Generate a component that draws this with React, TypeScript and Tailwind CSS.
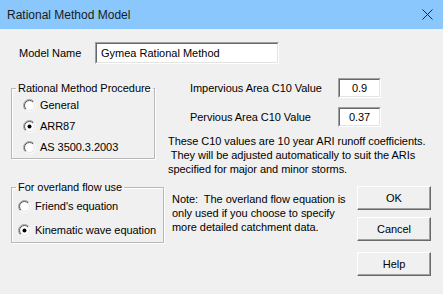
import React from 'react'

const font = "font-['Liberation_Sans',Arial,sans-serif]"

function Radio({ checked }: { checked?: boolean }) {
  return (
    <svg width="13" height="13" viewBox="0 0 13 13" className="shrink-0">
      <defs>
        <linearGradient id="rOuter" x1="0" y1="0" x2="1" y2="1">
          <stop offset="0.45" stopColor="#a0a0a0" />
          <stop offset="0.55" stopColor="#ffffff" />
        </linearGradient>
        <linearGradient id="rInner" x1="0" y1="0" x2="1" y2="1">
          <stop offset="0.45" stopColor="#505050" />
          <stop offset="0.55" stopColor="#e3e3e3" />
        </linearGradient>
      </defs>
      <circle cx="6.5" cy="6.5" r="6" fill="none" stroke="url(#rOuter)" strokeWidth="1" />
      <circle cx="6.5" cy="6.5" r="5" fill="#fff" stroke="url(#rInner)" strokeWidth="1" />
      {checked && <circle cx="6.5" cy="6.5" r="2" fill="#000" />}
    </svg>
  )
}

function Sunken({ className, children }: { className: string; children?: React.ReactNode }) {
  return (
    <div className={`border-t border-l border-t-[#a0a0a0] border-l-[#a0a0a0] border-b border-r border-b-white border-r-white ${className}`}>
      <div className="h-full w-full bg-white border-t border-l border-t-[#696969] border-l-[#696969] border-b border-r border-b-[#e3e3e3] border-r-[#e3e3e3] flex items-center">
        {children}
      </div>
    </div>
  )
}

function Button({ label }: { label: string }) {
  return (
    <div className="w-[74px] h-[24px] bg-[#f0f0f0] border-t border-l border-t-white border-l-white border-b border-r border-b-[#696969] border-r-[#696969] shadow-[inset_-1px_-1px_0_#a0a0a0] flex items-center justify-center text-[11px] text-black">
      {label}
    </div>
  )
}

function Group({ title, width, children }: { title: string; width: string; children: React.ReactNode }) {
  return (
    <fieldset className={`${width} border border-[#b8b8b8] shadow-[inset_1px_1px_0_#fff,1px_1px_0_#fff] pl-[4px]`}>
      <legend className="px-[2px] leading-[14px] text-[11px]">{title}</legend>
      {children}
    </fieldset>
  )
}

export default function App() {
  return (
    <div className={`w-[443px] h-[294px] bg-[#f0f0f0] text-black ${font} overflow-hidden`}>
      {/* title bar */}
      <div className="h-[29px] bg-[#8ac7fd] flex items-center justify-between pl-[7px] pr-[10px]">
        <span className="text-[12px] text-[#1a1a1a]">Rational Method Model</span>
        <svg width="11" height="11" viewBox="0 0 11 11">
          <path d="M0.5 0.5 L10.5 10.5 M10.5 0.5 L0.5 10.5" stroke="#222" strokeWidth="1" />
        </svg>
      </div>

      {/* model name */}
      <div className="flex items-center pl-[19px] pt-[13px] text-[11px]">
        <span className="w-[76px]">Model Name</span>
        <Sunken className="w-[184px] h-[22px]">
          <span className="pl-[4px]">Gymea Rational Method</span>
        </Sunken>
      </div>

      <div className="flex mt-[14px] text-[11px] tracking-[-0.05px]">
        {/* left column */}
        <div className="pl-[11px] pt-[3px] w-[164px] flex flex-col gap-[21px]">
          <Group title="Rational Method Procedure" width="w-[144px]">
            <div className="pl-[7px] flex flex-col">
              <label className="h-[21px] flex items-center gap-[4px]"><Radio /> General</label>
              <label className="h-[21px] flex items-center gap-[4px]"><Radio checked /> ARR87</label>
              <label className="h-[21px] flex items-center gap-[4px]"><Radio /> AS 3500.3.2003</label>
            </div>
          </Group>
          <Group title="For overland flow use" width="w-[153px]">
            <div className="pl-[2px] flex flex-col">
              <label className="h-[24px] flex items-center gap-[4px]"><Radio /> Friend's equation</label>
              <label className="h-[24px] flex items-center gap-[4px]"><Radio checked /> Kinematic wave equation</label>
            </div>
          </Group>
        </div>

        {/* right column */}
        <div className="flex flex-col">
          <div className="flex items-center h-[20px] pl-[26px]">
            <span className="w-[148px]">Impervious Area C10 Value</span>
            <Sunken className="w-[43px] h-[20px]">
              <span className="w-full text-center">0.9</span>
            </Sunken>
          </div>
          <div className="flex items-center h-[20px] pl-[26px] mt-[9px]">
            <span className="w-[148px]">Pervious Area C10 Value</span>
            <Sunken className="w-[43px] h-[20px]">
              <span className="w-full text-center">0.37</span>
            </Sunken>
          </div>
          <p className="mt-[7px] pl-[4px] leading-[14px] whitespace-pre">
            These C10 values are 10 year ARI runoff coefficients.{'\n'} They will be adjusted automatically to suit the ARIs{'\n'}specified for major and minor storms.
          </p>
          <div className="flex mt-[10px]">
            <p className="w-[193px] pl-[8px] pt-[6px] leading-[14px] whitespace-pre">
              Note:  The overland flow equation is{'\n'}only used if you choose to specify{'\n'}more detailed catchment data.
            </p>
            <div className="flex flex-col">
              <Button label="OK" />
              <div className="mt-[7px]"><Button label="Cancel" /></div>
              <div className="mt-[11px]"><Button label="Help" /></div>
            </div>
          </div>
        </div>
      </div>
    </div>
  )
}
